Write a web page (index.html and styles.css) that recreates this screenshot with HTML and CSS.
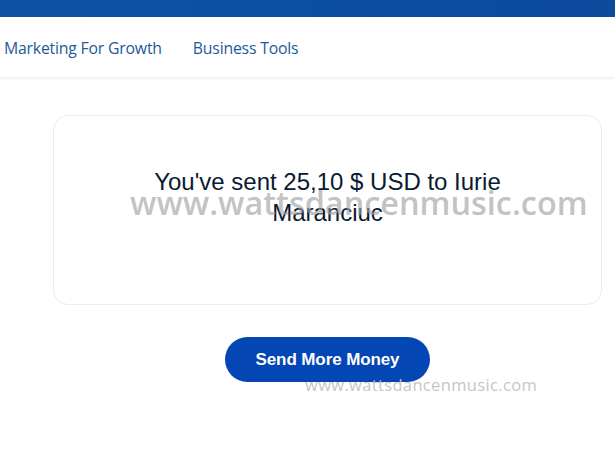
FILE: index.html
```html
<!DOCTYPE html>
<html>
<head>
<meta charset="utf-8">
<link rel="stylesheet" href="styles.css">
</head>
<body>
<div class="topbar"></div>
<nav class="nav">
  <a class="nav-link">Marketing For Growth</a>
  <a class="nav-link">Business Tools</a>
</nav>
<main class="main">
  <section class="card">
    <p class="message">You've sent 25,10 $ USD to Iurie Maranciuc</p>
    <span class="wm wm-big">www.wattsdancenmusic.com</span>
  </section>
  <div class="actions">
    <button class="btn">Send More Money</button>
    <span class="wm wm-small">www.wattsdancenmusic.com</span>
  </div>
</main>
</body>
</html>
```
FILE: styles.css
```css
html, body {
  margin: 0;
  padding: 0;
  background: #ffffff;
  overflow: hidden;
}
body {
  width: 615px;
  height: 460px;
  font-family: "Liberation Sans", Arial, sans-serif;
}
.topbar {
  height: 17px;
  background: linear-gradient(90deg, #0c53a3 0%, #0b4ea1 60%, #0c4a9c 100%);
}
.nav {
  height: 60px;
  display: flex;
  align-items: center;
  gap: 31px;
  padding-left: 4px;
  box-shadow: 0 1px 3px rgba(0,0,0,0.06);
  border-bottom: 1px solid #f0f0f0;
}
.nav-link {
  font-family: "Open Sans", "Noto Sans", sans-serif;
  font-size: 15.8px;
  color: #1d5a98;
  letter-spacing: -0.2px;
  padding-top: 2px;
}
.main {
  padding: 37px 13px 0 53px;
}
.card {
  position: relative;
  width: 549px;
  height: 190px;
  border: 1px solid #ececec;
  border-radius: 15px;
  display: flex;
  align-items: center;
  justify-content: center;
  box-sizing: border-box;
}
.message {
  margin: 0;
  width: 360px;
  text-align: center;
  font-size: 24px;
  line-height: 31px;
  color: #0a1a33;
  padding-bottom: 26px;
}
.wm {
  position: absolute;
  white-space: nowrap;
  font-family: "Open Sans", "Noto Sans", sans-serif;
}
.wm-big {
  left: 76px;
  top: 64px;
  font-size: 32.4px;
  font-weight: 600;
  letter-spacing: 0;
  color: rgba(160,160,160,0.65);
}
.actions {
  position: relative;
  display: flex;
  justify-content: center;
  padding-top: 32px;
  width: 549px;
}
.btn {
  width: 205px;
  height: 45px;
  border: none;
  border-radius: 23px;
  background: #0546b5;
  color: #ffffff;
  font-family: "Liberation Sans", Arial, sans-serif;
  font-weight: bold;
  font-size: 17px;
  letter-spacing: -0.1px;
  padding-top: 1px;
}
.wm-small {
  left: 252px;
  top: 68px;
  font-size: 16.5px;
  font-weight: 400;
  color: #c6c6c6;
  letter-spacing: 0.35px;
}
```
